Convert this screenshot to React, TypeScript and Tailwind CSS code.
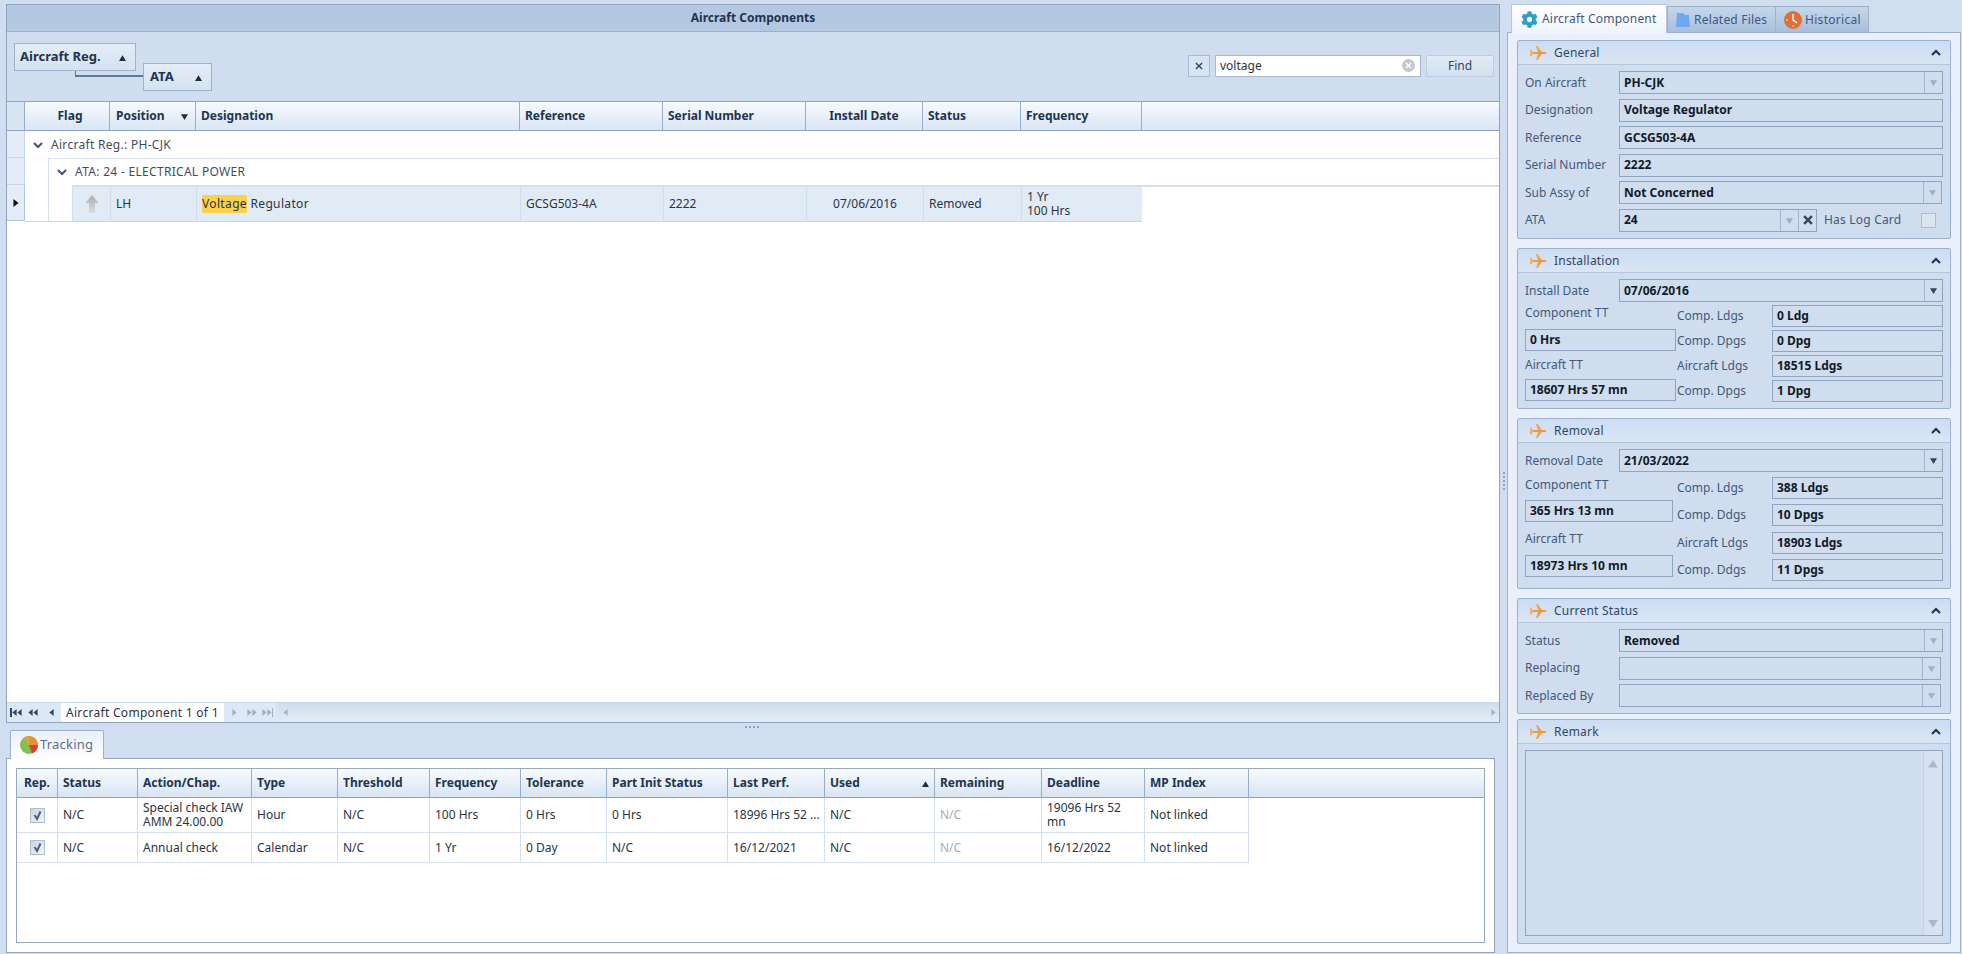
import React from "react";
import { FaCog } from "react-icons/fa";

const Plane = () => (
  <svg width="18" height="16" viewBox="0 0 18 16" className="shrink-0">
    <path d="M0 7 L15 7 Q18 8 15 9 L0 9 Z" fill="#ee9a3e" />
    <path d="M6 1 L7.5 1 L12 7 L8 7 Z M6 15 L7.5 15 L12 9 L8 9 Z" fill="#f0a24c" />
    <path d="M0 4.5 L1.5 4.5 L3.5 8 L1.5 11.5 L0 11.5 Z" fill="#f3b26c" />
  </svg>
);

const Tri = ({ dir, c = "#1e2c44", s = 7 }: { dir: "u" | "d" | "l" | "r"; c?: string; s?: number }) => {
  const pts = { u: "0,7 7,7 3.5,2", d: "0,2 7,2 3.5,7", l: "6.5,0 6.5,8 0.5,4", r: "0.5,0 0.5,8 6.5,4" }[dir];
  return (
    <svg width={s} height={s + 2} viewBox="0 0 7 8" preserveAspectRatio="none" className="shrink-0">
      <polygon points={pts} fill={c} />
    </svg>
  );
};

const Chevron = ({ up }: { up?: boolean }) => (
  <svg width="10" height="8" viewBox="0 0 10 8" className="shrink-0">
    <path d={up ? "M1 6 L5 2 L9 6" : "M1 2 L5 6 L9 2"} fill="none" stroke={up ? "#1f3150" : "#44546c"} strokeWidth="2" />
  </svg>
);

const Cross = ({ s = 9, w = 2 }: { s?: number; w?: number }) => (
  <svg width={s} height={s} viewBox="0 0 9 9">
    <path d="M1 1 L8 8 M8 1 L1 8" stroke="#33465f" strokeWidth={w} />
  </svg>
);

function Field({
  value,
  combo,
  activeCombo,
  className = "",
  h = "h-[23px]",
  extra,
}: {
  value?: string;
  combo?: boolean;
  activeCombo?: boolean;
  className?: string;
  h?: string;
  extra?: React.ReactNode;
}) {
  return (
    <div className={`flex items-stretch border border-[#8ea4bf] bg-[#cfddee] ${h} ${className}`}>
      <div className="flex flex-1 items-center overflow-hidden pl-1 font-bold text-[12px] text-[#111a28]">{value}</div>
      {(combo || activeCombo) && (
        <div className="flex w-[18px] items-center justify-center border-l border-[#a3b6cd]">
          <Tri dir="d" c={activeCombo ? "#33465f" : "#9fb0c4"} />
        </div>
      )}
      {extra}
    </div>
  );
}

function Row({ label, children }: { label: string; children: React.ReactNode }) {
  return (
    <div className="flex items-center">
      <div className="w-[94px] shrink-0 text-[12px] text-[#43597a]">{label}</div>
      {children}
    </div>
  );
}

function Section({ title, h, children }: { title: string; h: string; children?: React.ReactNode }) {
  return (
    <section className={`flex flex-col rounded-[2px] border border-[#9db2cc] bg-[#cfddee] ${h}`}>
      <header className="flex h-[24px] shrink-0 items-center border-b border-[#b4c6dc] bg-gradient-to-b from-[#cbdcf3] to-[#dbe6f4] pl-[12px] pr-[9px]">
        <Plane />
        <span className="ml-[6px] flex-1 text-[12px] tracking-[0.2px] text-[#2f4766]">{title}</span>
        <Chevron up />
      </header>
      {children}
    </section>
  );
}

function Tt({ label, value, w, lh }: { label: string; value: string; w: string; lh: string }) {
  return (
    <>
      <div className={`flex items-center text-[12px] text-[#43597a] ${lh}`}>{label}</div>
      <Field value={value} h="h-[22px]" className={w} />
    </>
  );
}

function Pair({ label, value, lw, fw }: { label: string; value: string; lw: string; fw: string }) {
  return (
    <div className="flex items-center">
      <div className={`shrink-0 text-[12px] text-[#43597a] ${lw}`}>{label}</div>
      <Field value={value} h="h-[22px]" className={fw} />
    </div>
  );
}

const mainCols = [
  { t: "Flag", w: "w-[85px]", cl: "text-center pl-[6px]" },
  { t: "Position", w: "w-[86px]", cl: "pl-[6px]", sort: true },
  { t: "Designation", w: "w-[324px]", cl: "pl-[5px]" },
  { t: "Reference", w: "w-[143px]", cl: "pl-[5px]" },
  { t: "Serial Number", w: "w-[143px]", cl: "pl-[5px]" },
  { t: "Install Date", w: "w-[117px]", cl: "text-center" },
  { t: "Status", w: "w-[98px]", cl: "pl-[5px]" },
  { t: "Frequency", w: "w-[121px]", cl: "pl-[5px]" },
];

const trackCols = [
  { t: "Rep.", w: "w-[41px]", cl: "text-center" },
  { t: "Status", w: "w-[80px]", cl: "pl-[5px]" },
  { t: "Action/Chap.", w: "w-[114px]", cl: "pl-[5px]" },
  { t: "Type", w: "w-[86px]", cl: "pl-[5px]" },
  { t: "Threshold", w: "w-[92px]", cl: "pl-[5px]" },
  { t: "Frequency", w: "w-[91px]", cl: "pl-[5px]" },
  { t: "Tolerance", w: "w-[86px]", cl: "pl-[5px]" },
  { t: "Part Init Status", w: "w-[121px]", cl: "pl-[5px]" },
  { t: "Last Perf.", w: "w-[97px]", cl: "pl-[5px]" },
  { t: "Used", w: "w-[110px]", cl: "pl-[5px]", sortUp: true },
  { t: "Remaining", w: "w-[107px]", cl: "pl-[5px]" },
  { t: "Deadline", w: "w-[103px]", cl: "pl-[5px]" },
  { t: "MP Index", w: "w-[104px]", cl: "pl-[5px]" },
];

const trackRows = [
  {
    h: "h-[35px]",
    cells: ["N/C", "Special check IAW AMM 24.00.00", "Hour", "N/C", "100 Hrs", "0 Hrs", "0 Hrs", "18996 Hrs 52 ...", "N/C", "N/C", "19096 Hrs 52 mn", "Not linked"],
  },
  {
    h: "h-[30px]",
    cells: ["N/C", "Annual check", "Calendar", "N/C", "1 Yr", "0 Day", "N/C", "16/12/2021", "N/C", "N/C", "16/12/2022", "Not linked"],
  },
];

const HeaderBar = ({ children, h }: { children: React.ReactNode; h: string }) => (
  <div className={`flex shrink-0 border-b border-[#8ea4bf] bg-gradient-to-b from-[#f6fafe] to-[#d9e5f3] ${h}`}>{children}</div>
);

const HCell = ({ t, w, cl, right }: { t: string; w: string; cl: string; right?: React.ReactNode }) => (
  <div className={`flex shrink-0 items-center border-r border-[#98adc6] text-[12px] font-bold text-[#22344f] ${w} ${cl}`}>
    <span className="flex-1 whitespace-nowrap">{t}</span>
    {right}
  </div>
);

const Check = () => (
  <div className="flex h-[15px] w-[15px] items-center justify-center border border-[#aebdd0] bg-gradient-to-br from-[#c9d5e4] to-[#f1f5fa]">
    <svg width="11" height="11" viewBox="0 0 11 11">
      <path d="M2.5 5 L5 9 L8.5 1.5" fill="none" stroke="#4a5f80" strokeWidth="2" />
    </svg>
  </div>
);

const Dot = () => <span className="h-[2px] w-[2px] bg-[#8ea4bf]" />;

const dark = "#33465f";
const faded = "#9fb0c4";

export default function App() {
  return (
    <div className="flex h-[954px] w-[1962px] overflow-hidden bg-[#d0deef] font-['Noto_Sans','Liberation_Sans',sans-serif] text-[12px] text-[#2a3443]">
      {/* Left column */}
      <div className="flex w-[1500px] shrink-0 flex-col pl-[6px] pt-[4px]">
        <div className="flex h-[719px] shrink-0 flex-col border border-[#8ea4bf]">
          <div className="flex h-[27px] shrink-0 items-center justify-center border-b border-[#9bb0ca] bg-[#b4c9e1] text-[12px] font-bold text-[#22344f]">
            Aircraft Components
          </div>
          {/* Group-by toolbar */}
          <div className="relative flex h-[70px] shrink-0 items-center justify-end gap-[5px] border-b border-[#8ea4bf] bg-[#cfddef] pb-[2px] pr-[5px]">
            <div className="absolute left-[7px] top-[11px] flex h-[28px] w-[122px] items-center justify-between border border-[#9db2cc] bg-gradient-to-b from-[#e4edf8] to-[#d6e2f1] pl-[5px] pr-[9px] text-[13px] font-bold text-[#22344f]">
              Aircraft Reg.
              <Tri dir="u" />
            </div>
            <div className="absolute left-[68px] top-[39px] h-[6px] w-[70px] border-b-2 border-l border-[#5f7798]" />
            <div className="absolute left-[136px] top-[31px] flex h-[28px] w-[69px] items-center justify-between border border-[#9db2cc] bg-gradient-to-b from-[#e4edf8] to-[#d6e2f1] pl-[6px] pr-[9px] text-[13px] font-bold text-[#22344f]">
              ATA
              <Tri dir="u" />
            </div>
            <div className="flex h-[22px] w-[22px] items-center justify-center border border-[#a8bbd2] bg-[#d9e4f2]">
              <Cross s={8} w={1.6} />
            </div>
            <div className="flex h-[22px] w-[206px] items-center justify-between border border-[#a8bbd2] bg-white pl-[4px] pr-[5px] text-[#2a3443]">
              voltage
              <svg width="13" height="13" viewBox="0 0 13 13">
                <circle cx="6.5" cy="6.5" r="6.5" fill="#c3c8d0" />
                <path d="M4 4 L9 9 M9 4 L4 9" stroke="#fff" strokeWidth="1.5" />
              </svg>
            </div>
            <div className="flex h-[22px] w-[68px] items-center justify-center rounded-[2px] border border-[#bccde0] bg-gradient-to-b from-[#e2ebf6] to-[#d3e0ef] text-[#33465f]">Find</div>
          </div>
          {/* Main grid header */}
          <HeaderBar h="h-[29px]">
            <div className="w-[18px] shrink-0 border-r border-[#98adc6] bg-[#d8e4f2]" />
            {mainCols.map((c) => (
              <HCell key={c.t} t={c.t} w={c.w} cl={c.cl} right={c.sort ? <span className="mr-[7px]"><Tri dir="d" /></span> : undefined} />
            ))}
          </HeaderBar>
          {/* Main grid body */}
          <div className="flex flex-1 bg-white">
            <div className="flex w-[18px] shrink-0 flex-col">
              <div className="h-[27px] border-b border-r border-[#c7d5e5] bg-[#e4edf7]" />
              <div className="h-[27px] border-b border-r border-[#c7d5e5] bg-[#e4edf7]" />
              <div className="flex h-[36px] items-center justify-center border-b border-r border-[#b3c3d6] bg-[#e4edf7]">
                <Tri dir="r" c="#111" s={6} />
              </div>
            </div>
            <div className="relative flex flex-1 flex-col self-start">
              <div className="flex h-[27px] items-center pl-[8px] tracking-[0.3px] text-[#3f4c5f]">
                <Chevron />
                <span className="ml-[8px]">Aircraft Reg.: PH-CJK</span>
              </div>
              <div className="ml-[23px] border-l border-t border-[#d5e0ec]">
                <div className="flex h-[26px] items-center pl-[8px] tracking-[0.3px] text-[#3f4c5f]">
                  <Chevron />
                  <span className="ml-[8px]">ATA: 24 - ELECTRICAL POWER</span>
                </div>
                <div className="ml-[23px] border-l border-t-2 border-[#d5e0ec]">
                  <div className="flex h-[35px]">
                    <div className="flex w-[1069px] shrink-0 border-b border-[#c7d5e5] bg-[#e1ebf6] text-[#2a3443]">
                      <div className="flex w-[38px] items-center justify-center border-r border-[#d0dcea]">
                        <svg width="14" height="20" viewBox="0 0 14 20">
                          <defs>
                            <linearGradient id="arrowGrad" x1="0" y1="0" x2="0" y2="1">
                              <stop offset="0" stopColor="#a9aeb3" />
                              <stop offset="1" stopColor="#d8dbde" />
                            </linearGradient>
                          </defs>
                          <path d="M7 1 L13.5 9 L10 9 L10 19 L4 19 L4 9 L0.5 9 Z" fill="url(#arrowGrad)" />
                        </svg>
                      </div>
                      <div className="flex w-[86px] items-center border-r border-[#d0dcea] pl-[5px]">LH</div>
                      <div className="flex w-[324px] items-center border-r border-[#d0dcea] pl-[5px] tracking-[0.35px]">
                        <span className="bg-[#fbd04b]">Voltage</span>&nbsp;Regulator
                      </div>
                      <div className="flex w-[143px] items-center border-r border-[#d0dcea] pl-[5px]">GCSG503-4A</div>
                      <div className="flex w-[143px] items-center border-r border-[#d0dcea] pl-[5px]">2222</div>
                      <div className="flex w-[117px] items-center justify-center border-r border-[#d0dcea]">07/06/2016</div>
                      <div className="flex w-[98px] items-center border-r border-[#d0dcea] pl-[5px]">Removed</div>
                      <div className="flex w-[120px] flex-col justify-center pl-[5px] leading-[14px]">
                        <span>1 Yr</span>
                        <span>100 Hrs</span>
                      </div>
                    </div>
                  </div>
                </div>
              </div>
              <div className="absolute bottom-0 left-0 h-px w-[47px] bg-[#c7d5e5]" />
            </div>
          </div>
          {/* Pager */}
          <div className="flex h-[20px] shrink-0 items-center border-t border-[#cddaea] bg-gradient-to-b from-[#cedcec] to-[#e4edf7]">
            <div className="flex h-full w-[54px] items-center bg-[#dde8f5] pl-[3px]">
              <span className="h-[9px] w-[2px] bg-[#33465f]" />
              <Tri dir="l" c={dark} s={5} />
              <Tri dir="l" c={dark} s={5} />
              <span className="ml-[6px]" />
              <Tri dir="l" c={dark} s={5} />
              <Tri dir="l" c={dark} s={5} />
              <span className="ml-[11px]" />
              <Tri dir="l" c={dark} s={5} />
            </div>
            <div className="flex h-full w-[163px] items-center bg-white pl-[5px] tracking-[0.3px] text-[#2a3443]">Aircraft Component 1 of 1</div>
            <div className="flex h-full w-[52px] items-center bg-[#dfe9f5] pl-[8px]">
              <Tri dir="r" c={faded} s={5} />
              <span className="ml-[10px]" />
              <Tri dir="r" c={faded} s={5} />
              <Tri dir="r" c={faded} s={5} />
              <span className="ml-[5px]" />
              <Tri dir="r" c={faded} s={5} />
              <Tri dir="r" c={faded} s={5} />
              <span className="h-[9px] w-[1px] bg-[#9fb0c4]" />
            </div>
            <div className="ml-[7px] flex flex-1 items-center justify-between pr-[3px]">
              <Tri dir="l" c="#a3b3c6" s={5} />
              <Tri dir="r" c="#a3b3c6" s={5} />
            </div>
          </div>
        </div>
        {/* Splitter */}
        <div className="flex h-[7px] shrink-0 items-center justify-center gap-[2px] pr-[2px]">
          <Dot />
          <Dot />
          <Dot />
          <Dot />
        </div>
        {/* Tracking tab */}
        <div className="relative z-10 -mb-px ml-[4px] flex h-[29px] w-[94px] shrink-0 items-center gap-[2px] rounded-t-[2px] border border-b-0 border-[#9db2cc] bg-gradient-to-b from-[#e9f0f9] to-white pl-[9px] text-[13px] tracking-[0.2px] text-[#5c6f87]">
          <svg width="18" height="18" viewBox="0 0 18 18" className="shrink-0">
            <circle cx="9" cy="9" r="9" fill="#83bf4f" />
            <path d="M9 9 L9 0 A9 9 0 0 1 18 9 Z" fill="#ee8d3a" />
            <path d="M9 9 L18 9 A9 9 0 0 1 12 17.4 Z" fill="#d9412a" />
            <path d="M9 9 L9 0 A9 9 0 0 0 3 2.2 Z" fill="#d8a63d" />
          </svg>
          Tracking
        </div>
        <div className="flex h-[195px] w-[1489px] shrink-0 flex-col border border-[#8ea4bf] bg-white p-[9px]">
          <div className="flex h-[175px] flex-col border border-[#98a9bd]">
            <HeaderBar h="h-[29px]">
              {trackCols.map((c) => (
                <HCell key={c.t} t={c.t} w={c.w} cl={c.cl} right={c.sortUp ? <span className="mr-[5px]"><Tri dir="u" /></span> : undefined} />
              ))}
            </HeaderBar>
            {trackRows.map((r, i) => (
              <div key={i} className={`flex shrink-0 ${r.h}`}>
                <div className="flex w-[41px] shrink-0 items-center justify-center border-b border-r border-[#d5e0ec]">
                  <Check />
                </div>
                {r.cells.map((cell, j) => (
                  <div
                    key={j}
                    className={`flex shrink-0 items-center overflow-hidden border-b border-r border-[#d5e0ec] pl-[5px] pr-[4px] leading-[14px] ${trackCols[j + 1].w} ${j === 9 ? "text-[#a4acb7]" : "text-[#2a3443]"}`}
                  >
                    {cell}
                  </div>
                ))}
              </div>
            ))}
          </div>
        </div>
      </div>

      {/* Vertical splitter */}
      <div className="flex w-[7px] shrink-0 flex-col items-center justify-center gap-[2px] pt-[8px]">
        <Dot />
        <Dot />
        <Dot />
        <Dot />
        <Dot />
      </div>

      {/* Right column */}
      <div className="flex flex-1 flex-col pt-[4px]">
        <div className="relative z-10 -mb-px ml-[4px] flex h-[29px] shrink-0 items-end">
          <div className="flex h-[29px] w-[156px] items-center gap-[4px] rounded-t-[2px] border border-b-0 border-[#b4c6dc] bg-gradient-to-b from-white to-[#eef4fa] pl-[9px] text-[12px] tracking-[0.2px] text-[#43597a]">
            <FaCog size={17} color="#2f9ec4" />
            Aircraft Component
          </div>
          <div className="flex h-[27px] w-[109px] items-center gap-[3px] border border-[#9db2cc] bg-gradient-to-b from-[#c6d6e9] to-[#a7bfdc] pl-[7px] tracking-[0.2px] text-[#3c5a7f]">
            <svg width="16" height="17" viewBox="0 0 16 17" className="shrink-0">
              <path d="M2 2 L8 2 L10 4 L14 4 L14 6 L15 16 L1 16 Z" fill="#6ea9f0" />
            </svg>
            Related Files
          </div>
          <div className="flex h-[27px] w-[93px] items-center gap-[3px] border border-l-0 border-[#9db2cc] bg-gradient-to-b from-[#c6d6e9] to-[#a7bfdc] pl-[8px] tracking-[0.3px] text-[#3c5a7f]">
            <svg width="18" height="18" viewBox="0 0 18 18" className="shrink-0">
              <circle cx="9" cy="9" r="9" fill="#e0703a" />
              <path d="M9 3 L9 9 L13 12" fill="none" stroke="#fff" strokeWidth="1.4" />
              <circle cx="9" cy="15" r="0.8" fill="#fff" />
              <circle cx="3" cy="9" r="0.8" fill="#fff" />
            </svg>
            Historical
          </div>
        </div>
        <div className="flex h-[921px] w-[454px] shrink-0 flex-col gap-[9px] border border-[#9db2cc] bg-[#e9f0f9] px-[9px] pt-[7px]">
          <Section title="General" h="h-[199px]">
            <div className="flex flex-col gap-[4.5px] px-[7px] pt-[6px]">
              <Row label="On Aircraft"><Field value="PH-CJK" combo className="flex-1" /></Row>
              <Row label="Designation"><Field value="Voltage Regulator" className="flex-1" /></Row>
              <Row label="Reference"><Field value="GCSG503-4A" className="flex-1" /></Row>
              <Row label="Serial Number"><Field value="2222" className="flex-1" /></Row>
              <Row label="Sub Assy of"><Field value="Not Concerned" combo className="mr-[1px] flex-1" /></Row>
              <Row label="ATA">
                <Field
                  value="24"
                  combo
                  className="w-[198px]"
                  extra={
                    <div className="flex w-[18px] items-center justify-center border-l border-[#a3b6cd]">
                      <Cross s={10} w={2.2} />
                    </div>
                  }
                />
                <span className="ml-[7px] flex-1 text-[12px] tracking-[0.2px] text-[#43597a]">Has Log Card</span>
                <span className="mr-[7px] h-[15px] w-[15px] border border-[#aebdd0] bg-[#dbe5f1]" />
              </Row>
            </div>
          </Section>

          <Section title="Installation" h="h-[161px]">
            <div className="flex flex-col gap-[3px] px-[7px] pt-[6px]">
              <Row label="Install Date"><Field value="07/06/2016" activeCombo className="flex-1" /></Row>
              <div className="flex">
                <div className="flex w-[155px] flex-col">
                  <Tt label="Component TT" value="0 Hrs" w="w-[151px]" lh="h-[24px] pb-[8px]" />
                  <Tt label="Aircraft TT" value="18607 Hrs 57 mn" w="w-[151px]" lh="h-[28px]" />
                </div>
                <div className="flex flex-1 flex-col gap-[3px]">
                  <Pair label="Comp. Ldgs" value="0 Ldg" lw="w-[95px]" fw="w-[171px]" />
                  <Pair label="Comp. Dpgs" value="0 Dpg" lw="w-[95px]" fw="w-[171px]" />
                  <Pair label="Aircraft Ldgs" value="18515 Ldgs" lw="w-[95px]" fw="w-[171px]" />
                  <Pair label="Comp. Dpgs" value="1 Dpg" lw="w-[95px]" fw="w-[171px]" />
                </div>
              </div>
            </div>
          </Section>

          <Section title="Removal" h="h-[171px]">
            <div className="flex flex-col gap-[5px] px-[7px] pt-[6px]">
              <Row label="Removal Date"><Field value="21/03/2022" activeCombo className="flex-1" /></Row>
              <div className="flex">
                <div className="flex w-[153px] flex-col">
                  <Tt label="Component TT" value="365 Hrs 13 mn" w="w-[148px]" lh="h-[23px] pb-[8px]" />
                  <Tt label="Aircraft TT" value="18973 Hrs 10 mn" w="w-[148px]" lh="h-[33px]" />
                </div>
                <div className="flex flex-1 flex-col gap-[5.3px]">
                  <Pair label="Comp. Ldgs" value="388 Ldgs" lw="w-[95px]" fw="w-[171px]" />
                  <Pair label="Comp. Ddgs" value="10 Dpgs" lw="w-[95px]" fw="w-[171px]" />
                  <Pair label="Aircraft Ldgs" value="18903 Ldgs" lw="w-[95px]" fw="w-[171px]" />
                  <Pair label="Comp. Ddgs" value="11 Dpgs" lw="w-[95px]" fw="w-[171px]" />
                </div>
              </div>
            </div>
          </Section>

          <div className="flex flex-col gap-[5px]">
            <Section title="Current Status" h="h-[116px]">
              <div className="flex flex-col gap-[4.5px] px-[7px] pt-[6px]">
                <Row label="Status"><Field value="Removed" combo className="flex-1" /></Row>
                <Row label="Replacing"><Field combo className="mr-[2px] flex-1" /></Row>
                <Row label="Replaced By"><Field combo className="mr-[2px] flex-1" /></Row>
              </div>
            </Section>
            <Section title="Remark" h="h-[225px]">
              <div className="mx-[7px] mt-[6px] flex h-[186px] border border-[#8ea4bf]">
                <div className="flex-1" />
                <div className="flex w-[19px] flex-col items-center justify-between border-l border-[#c4d3e5] bg-[#d6e2f1] py-[6px]">
                  <Tri dir="u" c="#a9b9cc" s={10} />
                  <Tri dir="d" c="#a9b9cc" s={10} />
                </div>
              </div>
            </Section>
          </div>
        </div>
      </div>
    </div>
  );
}
